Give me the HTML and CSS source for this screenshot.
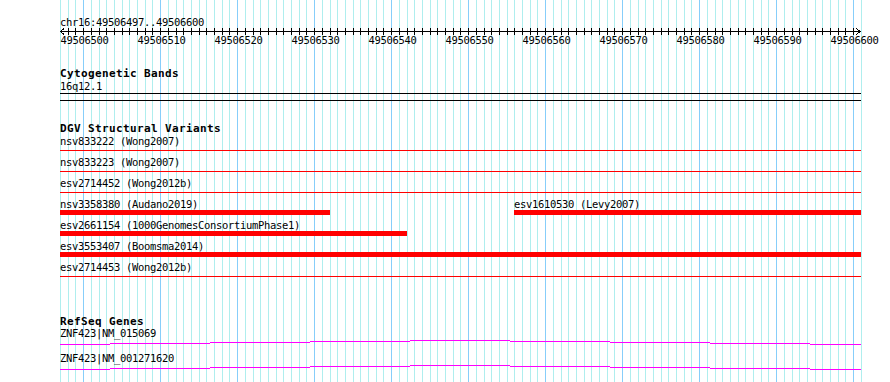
FILE: index.html
```html
<!DOCTYPE html>
<html>
<head>
  <title>chr16:49506497..49506600</title>
  <link rel="stylesheet" href="styles.css">
</head>
<body>

<div class="panel">
  <svg class="grid" id="grid" width="890" height="382"></svg>

  <div class="tracks">
    <div class="locus">chr16:49506497..49506600</div>
    <svg class="ruler" id="ruler" width="801" height="20"></svg>

    <section class="track bands">
      <h2 class="track-title">Cytogenetic Bands</h2>
      <div class="band-label">16q12.1</div>
      <div class="band"></div>
    </section>

    <section class="track dgv">
      <h2 class="track-title">DGV Structural Variants</h2>
      <div class="lane">
        <div class="feature" data-start="49506000" data-end="49507000">
          <div class="label">nsv833222 (Wong2007)</div>
          <div class="glyph line"></div>
        </div>
      </div>
      <div class="lane">
        <div class="feature" data-start="49506000" data-end="49507000">
          <div class="label">nsv833223 (Wong2007)</div>
          <div class="glyph line"></div>
        </div>
      </div>
      <div class="lane">
        <div class="feature" data-start="49506000" data-end="49507000">
          <div class="label">esv2714452 (Wong2012b)</div>
          <div class="glyph line"></div>
        </div>
      </div>
      <div class="lane">
        <div class="feature" data-start="49506000" data-end="49506531">
          <div class="label">nsv3358380 (Audano2019)</div>
          <div class="glyph bar"></div>
        </div>
        <div class="feature" data-start="49506556" data-end="49507000">
          <div class="label">esv1610530 (Levy2007)</div>
          <div class="glyph bar"></div>
        </div>
      </div>
      <div class="lane">
        <div class="feature" data-start="49506000" data-end="49506541">
          <div class="label">esv2661154 (1000GenomesConsortiumPhase1)</div>
          <div class="glyph bar"></div>
        </div>
      </div>
      <div class="lane">
        <div class="feature" data-start="49506000" data-end="49507000">
          <div class="label">esv3553407 (Boomsma2014)</div>
          <div class="glyph bar"></div>
        </div>
      </div>
      <div class="lane">
        <div class="feature" data-start="49506000" data-end="49507000">
          <div class="label">esv2714453 (Wong2012b)</div>
          <div class="glyph line"></div>
        </div>
      </div>
    </section>

    <section class="track genes">
      <h2 class="track-title">RefSeq Genes</h2>
      <div class="gene-lane">
        <div class="label">ZNF423|NM_015069</div>
        <svg class="intron" width="801" height="7">
          <path d="M0,5.5H50M50,4.5H150M150,3.5H250M250,2.5H350M350,1.5H450M450,2.5H550M550,3.5H650M650,4.5H750M750,5.5H801"/>
        </svg>
      </div>
      <div class="gene-lane">
        <div class="label">ZNF423|NM_001271620</div>
        <svg class="intron" width="801" height="7">
          <path d="M0,5.5H50M50,4.5H150M150,3.5H250M250,2.5H350M350,1.5H450M450,2.5H550M550,3.5H650M650,4.5H750M750,5.5H801"/>
        </svg>
      </div>
    </section>
  </div>
</div>

<script>
const START = 49506497;
const END = 49506600;
const BP = 7.7; // pixels per base
const LEFT = 60;
const NS = 'http://www.w3.org/2000/svg';

function svgEl(name, attrs) {
  const el = document.createElementNS(NS, name);
  for (const k in attrs) el.setAttribute(k, attrs[k]);
  return el;
}

function xOf(pos) {
  return Math.round((pos - START) * BP);
}

// grid
const grid = document.getElementById('grid');
for (let p = START; p <= END + 1; p++) {
  const x = LEFT + xOf(p) + 0.5;
  grid.appendChild(svgEl('line', {
    x1: x, x2: x, y1: 0, y2: 382,
    class: p % 10 === 0 ? 'major' : 'minor'
  }));
}

// ruler
const ruler = document.getElementById('ruler');
const right = xOf(END + 1);
ruler.appendChild(svgEl('line', { x1: 0, x2: right, y1: 3.5, y2: 3.5 }));
ruler.appendChild(svgEl('polyline', { points: '4,0.5 0.5,3.5 4,6.5' }));
ruler.appendChild(svgEl('polyline', { points: (right - 5) + ',0.5 ' + (right - 0.5) + ',3.5 ' + (right - 5) + ',6.5' }));
for (let p = START + 1; p <= END; p++) {
  const x = xOf(p) + 0.5;
  ruler.appendChild(svgEl('line', { x1: x, x2: x, y1: 0, y2: 7 }));
  if (p % 10 === 0) {
    const t = svgEl('text', { x: x + 1, y: 16, 'text-anchor': 'middle' });
    t.textContent = p;
    ruler.appendChild(t);
  }
}

// features
document.querySelectorAll('.feature').forEach(f => {
  const s = Math.max(+f.dataset.start, START);
  const e = Math.min(+f.dataset.end, END);
  const l = xOf(s);
  f.style.left = l + 'px';
  f.style.width = (xOf(e + 1) - l) + 'px';
});
</script>

</body>
</html>
```

FILE: styles.css
```css
html, body {
  margin: 0;
  padding: 0;
  background: white;
  color: black;
  font-family: "DejaVu Sans Mono", "Liberation Mono", monospace;
  font-size: 10.5px;
  letter-spacing: -0.32px;
}

.panel {
  position: relative;
  width: 890px;
  height: 382px;
  overflow: hidden;
}

.grid {
  position: absolute;
  top: 0;
  left: 0;
  shape-rendering: crispEdges;
}

.grid .minor {
  stroke: #afeeee;
  stroke-width: 1;
}

.grid .major {
  stroke: #87cefa;
  stroke-width: 1;
}

.tracks {
  position: relative;
  margin-left: 60px;
  width: 801px;
}

.locus {
  margin-top: 16px;
  line-height: 12px;
  white-space: nowrap;
}

.ruler {
  display: block;
  overflow: visible;
  shape-rendering: crispEdges;
}

.ruler line,
.ruler polyline {
  stroke: black;
  stroke-width: 1;
  fill: none;
}

.ruler text {
  font-family: "DejaVu Sans Mono", "Liberation Mono", monospace;
  font-size: 10.5px;
  letter-spacing: -0.32px;
  fill: black;
}

.track-title {
  margin: 0 0 1px;
  font-size: 11px;
  letter-spacing: 0.38px;
  line-height: 11px;
  font-weight: bold;
  white-space: nowrap;
}

.bands {
  margin-top: 20px;
}

.band-label {
  line-height: 12px;
}

.band {
  margin-top: 1px;
  height: 6px;
  border-top: 1px solid black;
  border-bottom: 1px solid black;
}

.dgv {
  margin-top: 22px;
}

.lane {
  position: relative;
  height: 21px;
}

.feature {
  position: absolute;
  top: 0;
}

.label {
  line-height: 12px;
  white-space: nowrap;
}

.glyph.line {
  margin-top: 3px;
  height: 1px;
  background: red;
}

.glyph.bar {
  height: 5px;
  background: red;
}

.genes {
  margin-top: 34px;
}

.gene-lane {
  height: 25px;
}

.gene-lane:first-of-type {
  margin-top: 1px;
}

.gene-lane .label {
  line-height: 11px;
}

.intron {
  display: block;
  shape-rendering: crispEdges;
}

.intron path {
  stroke: #ff00ff;
  stroke-width: 1;
  fill: none;
}
```
